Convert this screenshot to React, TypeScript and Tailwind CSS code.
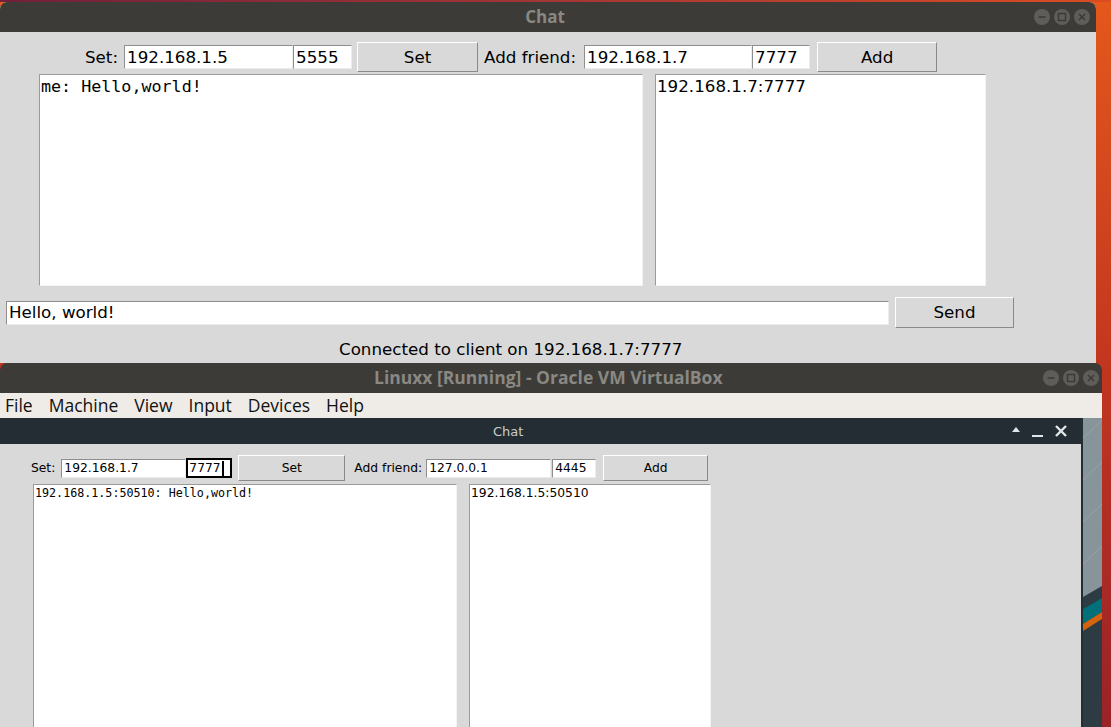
import React from "react";
import clsx from "clsx";

const sans = "font-['DejaVu_Sans',sans-serif]";
const mono = "font-['DejaVu_Sans_Mono',monospace]";
const ubuntu = "font-['Open_Sans',sans-serif]";

// Tk widgets: sunken entry / text, raised button
function Entry({
  value,
  className,
  focused,
}: {
  value: string;
  className?: string;
  focused?: boolean;
}) {
  return (
    <div
      className={clsx(
        "bg-white flex items-center overflow-hidden whitespace-nowrap leading-none shrink-0",
        focused
          ? "border-2 border-black pl-[1px]"
          : "border border-t-[#8e8e8e] border-l-[#8e8e8e] border-b-[#ececec] border-r-[#ececec] pl-[2px]",
        className
      )}
    >
      {value}
      {focused && <span className="inline-block w-[2px] h-[15px] bg-black ml-[1px]" />}
    </div>
  );
}

function Button({ label, className }: { label: string; className?: string }) {
  return (
    <div
      className={clsx(
        "bg-[#d9d9d9] border border-t-white border-l-white border-b-[#8a8a8a] border-r-[#8a8a8a] flex items-center justify-center shrink-0 leading-none",
        className
      )}
    >
      {label}
    </div>
  );
}

function Box({ className, children }: { className?: string; children?: React.ReactNode }) {
  return (
    <div
      className={clsx(
        "bg-white border border-t-[#9a9a9a] border-l-[#9a9a9a] border-b-[#f4f4f4] border-r-[#f4f4f4] shrink-0 overflow-hidden",
        className
      )}
    >
      {children}
    </div>
  );
}

// Ubuntu ambiance title buttons
function WinButtons({ className }: { className?: string }) {
  return (
    <svg width="56" height="16" viewBox="0 0 56 16" className={className}>
      <circle cx="8" cy="8" r="8" fill="#5e5d59" />
      <circle cx="28" cy="8" r="8" fill="#5e5d59" />
      <circle cx="48" cy="8" r="8" fill="#5e5d59" />
      <line x1="4.5" y1="8" x2="11.5" y2="8" stroke="#3a3935" strokeWidth="1.6" />
      <rect x="24.5" y="4.5" width="7" height="7" fill="none" stroke="#3a3935" strokeWidth="1.4" />
      <line x1="45" y1="5" x2="51" y2="11" stroke="#3a3935" strokeWidth="1.4" />
      <line x1="51" y1="5" x2="45" y2="11" stroke="#3a3935" strokeWidth="1.4" />
    </svg>
  );
}

function VmDesktop() {
  return (
    <svg width="21" height="309" viewBox="0 0 21 309" className="shrink-0 block">
      <rect x="0" y="0" width="21" height="309" fill="#2d3b43" />
      <polygon points="2,0 21,0 21,168 2,179" fill="#87949a" />
      <line x1="2" y1="20" x2="21" y2="2" stroke="#a3aeb3" strokeWidth="0.6" />
      <line x1="2" y1="62" x2="21" y2="44" stroke="#a3aeb3" strokeWidth="0.6" />
      <line x1="2" y1="104" x2="21" y2="86" stroke="#a3aeb3" strokeWidth="0.6" />
      <line x1="2" y1="146" x2="21" y2="128" stroke="#a3aeb3" strokeWidth="0.6" />
      <polygon points="2,191 21,180 21,194 2,206" fill="#00707a" />
      <polygon points="2,206 21,194 21,201 2,213" fill="#d5620c" />
      <rect x="0" y="0" width="2" height="309" fill="#232e35" />
    </svg>
  );
}

function TopChat() {
  return (
    <div className="w-[1096px] h-[361px] rounded-t-[7px] overflow-hidden flex flex-col bg-[#d9d9d9] shrink-0">
      <div className="relative h-[30px] bg-[#3c3b37] flex items-center justify-center pr-[6px]">
        <span className={clsx(ubuntu, "font-bold text-[17px] text-[#8a8883]")}>Chat</span>
        <WinButtons className="absolute right-[6px] top-[7px]" />
      </div>
      <div className={clsx(sans, "flex-1 flex flex-col text-[16.7px] text-black")}>
        <div className="mt-[10px] h-[30px] flex items-center pl-[85px]">
          <span className="leading-none">Set:</span>
          <Entry value="192.168.1.5" className="ml-[6px] w-[169px] h-[24px]" />
          <Entry value="5555" className="w-[59px] h-[24px]" />
          <Button label="Set" className="ml-[5px] w-[121px] h-[30px]" />
          <span className="ml-[6px] leading-none">Add friend:</span>
          <Entry value="192.168.1.7" className="ml-[8px] w-[168px] h-[24px]" />
          <Entry value="7777" className="w-[58px] h-[24px]" />
          <Button label="Add" className="ml-[7px] w-[120px] h-[30px]" />
        </div>
        <div className="mt-[2px] flex pl-[39px]">
          <Box className="w-[604px] h-[212px] pl-[1px]">
            <div className={clsx(mono, "leading-[22px]")}>me: Hello,world!</div>
          </Box>
          <Box className="ml-[12px] w-[331px] h-[212px] pl-[1px]">
            <div className="leading-[22px]">192.168.1.7:7777</div>
          </Box>
        </div>
        <div className="mt-[11px] h-[31px] flex items-center pl-[6px]">
          <Entry value="Hello, world!" className="w-[883px] h-[24px]" />
          <Button label="Send" className="ml-[6px] w-[119px] h-[31px]" />
        </div>
        <div className="mt-[11px] pl-[339px] leading-[20px]">
          Connected to client on 192.168.1.7:7777
        </div>
      </div>
    </div>
  );
}

function InnerChat() {
  return (
    <div className="w-[1081px] flex flex-col shrink-0">
      <div className="relative h-[26px] bg-[#232d33] flex items-center pl-[493px]">
        <span className={clsx(sans, "text-[13px] text-[#c9cdcf] leading-none")}>Chat</span>
        <svg width="64" height="16" viewBox="0 0 64 16" className="absolute right-[6px] top-[5px]">
          <polygon points="1,9 9,9 5,4" fill="#e2e6e8" />
          <line x1="21" y1="13" x2="32" y2="13" stroke="#e2e6e8" strokeWidth="2" />
          <line x1="45" y1="3" x2="55" y2="13" stroke="#e2e6e8" strokeWidth="2.4" />
          <line x1="55" y1="3" x2="45" y2="13" stroke="#e2e6e8" strokeWidth="2.4" />
        </svg>
      </div>
      <div className={clsx(sans, "h-[283px] overflow-hidden bg-[#d9d9d9] text-[12.3px] text-black")}>
        <div className="mt-[11px] h-[26px] flex items-center pl-[31px]">
          <span className="leading-none">Set:</span>
          <Entry value="192.168.1.7" className="ml-[6px] w-[125px] h-[19px]" />
          <Entry value="7777" className="w-[46px] h-[20px]" focused />
          <Button label="Set" className="ml-[6px] w-[107px] h-[26px]" />
          <span className="ml-[9px] leading-none">Add friend:</span>
          <Entry value="127.0.0.1" className="ml-[4px] w-[125px] h-[19px]" />
          <Entry value="4445" className="ml-[1px] w-[44px] h-[19px]" />
          <Button label="Add" className="ml-[7px] w-[105px] h-[26px]" />
        </div>
        <div className="mt-[3px] flex pl-[33px]">
          <Box className="w-[424px] h-[260px] pl-[1px]">
            <div className={clsx(mono, "text-[11.7px] leading-[17px]")}>
              192.168.1.5:50510: Hello,world!
            </div>
          </Box>
          <Box className="ml-[12px] w-[242px] h-[260px] pl-[1px]">
            <div className="leading-[17px]">192.168.1.5:50510</div>
          </Box>
        </div>
      </div>
    </div>
  );
}

function VirtualBoxWindow() {
  return (
    <div className="w-[1102px] flex-1 rounded-t-[7px] overflow-hidden flex flex-col shrink-0">
      <div className="relative h-[30px] bg-[#3c3b37] flex items-center pl-[374px]">
        <span className={clsx(ubuntu, "font-bold text-[17.5px] text-[#8a8883] leading-none")}>
          Linuxx [Running] - Oracle VM VirtualBox
        </span>
        <WinButtons className="absolute right-[3px] top-[7px]" />
      </div>
      <div className={clsx(ubuntu, "h-[25px] bg-[#efebe7] flex items-center gap-[16px] pl-[5px] text-[17.5px] text-[#111] leading-none")}>
        <span>File</span>
        <span>Machine</span>
        <span>View</span>
        <span>Input</span>
        <span>Devices</span>
        <span>Help</span>
      </div>
      <div className="flex-1 flex overflow-hidden">
        <InnerChat />
        <VmDesktop />
      </div>
    </div>
  );
}

export default function App() {
  return (
    <div className="w-[1111px] h-[727px] overflow-hidden flex flex-col bg-linear-to-b from-[#e4581c] via-[#c2361f] to-[#9a2227]">
      <div className="h-[2px] shrink-0 bg-linear-to-r from-[#72203a] to-[#d94c1f]" />
      <TopChat />
      <VirtualBoxWindow />
    </div>
  );
}
